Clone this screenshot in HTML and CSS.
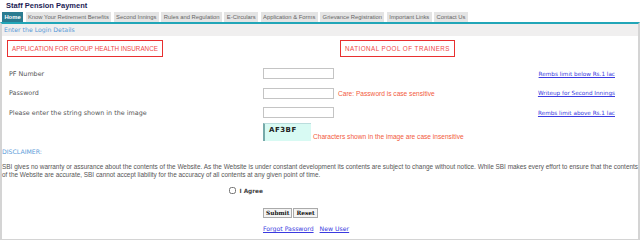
FILE: index.html
```html
<!DOCTYPE html>
<html lang="en">
<head>
    <meta charset="UTF-8">
    <meta name="viewport" content="width=device-width, initial-scale=1.0">
    <title>Staff Pension Payment</title>
    <link rel="stylesheet" href="styles.css">
</head>
<body>

<h1 class="site-title">Staff Pension Payment</h1>

<ul class="tabs">
    <li class="tab active">Home</li>
    <li class="tab">Know Your Retirement Benefits</li>
    <li class="tab">Second Innings</li>
    <li class="tab">Rules and Regulation</li>
    <li class="tab">E-Circulars</li>
    <li class="tab">Application &amp; Forms</li>
    <li class="tab">Grievance Registration</li>
    <li class="tab">Important Links</li>
    <li class="tab">Contact Us</li>
</ul>

<div class="panel">
    <div class="subhead">Enter the Login Details</div>

    <div class="promo-row">
        <div class="promo">APPLICATION FOR GROUP HEALTH INSURANCE</div>
        <div class="promo promo-wide">NATIONAL POOL OF TRAINERS</div>
    </div>

    <form class="login-form" onsubmit="return false;">
        <label class="field-label">PF Number</label>
        <input class="text-input" type="text">
        <span class="note"></span>
        <a class="side-link" href="#">Rembs limit below Rs.1 lac</a>

        <label class="field-label">Password</label>
        <input class="text-input" type="password">
        <span class="note">Care: Password is case sensitive</span>
        <a class="side-link" href="#">Writeup for Second Innings</a>

        <label class="field-label">Please enter the string shown in the image</label>
        <input class="text-input" type="text">
        <span class="note"></span>
        <a class="side-link" href="#">Rembs limit above Rs.1 lac</a>

        <span></span>
        <div class="captcha-row">
            <div class="captcha">AF3BF</div>
            <span class="note captcha-note">Characters shown in the image are case insensitive</span>
        </div>
    </form>

    <div class="disclaimer">
        <div class="disclaimer-title">DISCLAIMER:</div>
        <p class="disclaimer-text">SBI gives no warranty or assurance about the contents of the Website. As the Website is under constant development its contents are subject to change without notice. While SBI makes every effort to ensure that the contents of the Website are accurate, SBI cannot accept liability for the accuracy of all contents at any given point of time.</p>
    </div>

    <div class="actions">
        <label class="agree"><input type="checkbox" class="agree-box"> I Agree</label>
        <span></span>
        <span></span>
        <div class="buttons">
            <button class="btn">Submit</button><button class="btn">Reset</button>
        </div>
        <span></span>
        <div class="bottom-links">
            <a href="#">Forgot Password</a>
            <a href="#">New User</a>
        </div>
    </div>
</div>

</body>
</html>
```

FILE: styles.css
```css
:root {
    --teal: #2b7c91;
    --teal-line: #22a6b8;
    --red: #f04848;
    --link: #3a3ae0;
    --light-blue: #5a9ad8;
}

body {
    margin: 0;
    font-family: "Liberation Sans", Arial, sans-serif;
    background: #fff;
    color: #444;
}

.site-title {
    margin: 0;
    padding: 1px 0 0 6px;
    height: 11px;
    font-size: 7.5px;
    line-height: 9px;
    font-weight: bold;
    color: #1c1c55;
}

.tabs {
    list-style: none;
    margin: 0;
    padding: 0 0 0 2px;
    display: flex;
    gap: 2.5px;
    height: 10px;
}

.tab {
    background: #e4e4e4;
    color: #666;
    font-size: 5.85px;
    line-height: 10px;
    padding: 0 2.4px;
}

.tab.active {
    background: var(--teal);
    color: #fff;
    font-weight: bold;
}

.panel {
    border-top: 2px solid var(--teal-line);
    border-left: 2px solid #d4d4d4;
    border-right: 2px solid #d4d4d4;
    border-bottom: 2px solid #d4d4d4;
    height: 215px;
}

.subhead {
    background: #f0efef;
    color: var(--light-blue);
    font-family: "DejaVu Sans", Verdana, sans-serif;
    font-size: 6.2px;
    line-height: 12px;
    padding-left: 2px;
    height: 12px;
}

.promo-row {
    display: grid;
    grid-template-columns: 333px 1fr;
    padding: 4px 0 0 5px;
}

.promo {
    justify-self: start;
    border: 1px solid #e83030;
    color: var(--red);
    font-size: 6.3px;
    line-height: 15px;
    padding: 0 4px;
}

.promo-wide {
    letter-spacing: 0.45px;
}

.login-form {
    display: grid;
    grid-template-columns: 261px 73px 1fr 102px;
    grid-auto-rows: 19.5px;
    align-items: center;
    margin-top: 7px;
}

.field-label {
    padding-left: 7px;
    color: #555;
    font-family: "DejaVu Sans", Verdana, sans-serif;
    font-size: 6.4px;
}

.text-input {
    box-sizing: border-box;
    width: 71px;
    height: 11px;
    margin: 0;
    border: 1px solid #c4c4c4;
    padding: 0;
}

.note {
    color: #f25a3c;
    font-size: 6.6px;
    padding-left: 2px;
}

.side-link {
    justify-self: end;
    padding-right: 23px;
    color: var(--link);
    font-family: "DejaVu Sans", Verdana, sans-serif;
    font-size: 5.7px;
    white-space: nowrap;
}

.captcha-row {
    grid-column: 2 / 5;
    display: flex;
    align-items: flex-end;
    align-self: start;
}

.captcha {
    width: 42px;
    height: 17px;
    background: #d8faf3;
    border-left: 2px solid #7aa;
    border-top: 1px solid #bdd;
    padding-left: 4px;
    font-family: "DejaVu Sans", Verdana, sans-serif;
    font-weight: bold;
    font-size: 7px;
    line-height: 12px;
    color: #222;
    letter-spacing: 0.5px;
}

.captcha-note {
    line-height: 8px;
}

.disclaimer {
    padding-top: 6px;
}

.disclaimer-title {
    color: var(--light-blue);
    font-family: "DejaVu Sans", Verdana, sans-serif;
    font-size: 6.2px;
    line-height: 8px;
}

.disclaimer-text {
    margin: 7px 0 0;
    font-size: 6.42px;
    line-height: 8px;
    color: #555;
    text-align: justify;
}

.actions {
    display: grid;
    grid-template-columns: 261px 1fr;
    margin-top: 7px;
}

.agree {
    justify-self: end;
    display: flex;
    align-items: center;
    gap: 3px;
    font-family: "DejaVu Sans", Verdana, sans-serif;
    font-size: 5.8px;
    font-weight: bold;
    color: #444;
    height: 9px;
}

.agree-box {
    width: 7px;
    height: 7px;
    margin: 0;
}

.buttons {
    display: flex;
    gap: 1px;
    margin-top: 13px;
}

.btn {
    font-family: "DejaVu Serif", "Liberation Serif", serif;
    font-weight: bold;
    font-size: 5.8px;
    padding: 1px 2px;
    background: #f4f4f4;
    border: 1px solid #aaa;
    color: #111;
    height: 10px;
    line-height: 6px;
}

.bottom-links {
    display: flex;
    gap: 6px;
    margin-top: 7px;
}

.bottom-links a {
    color: var(--link);
    font-family: "DejaVu Sans", Verdana, sans-serif;
    font-size: 6.2px;
}
```
